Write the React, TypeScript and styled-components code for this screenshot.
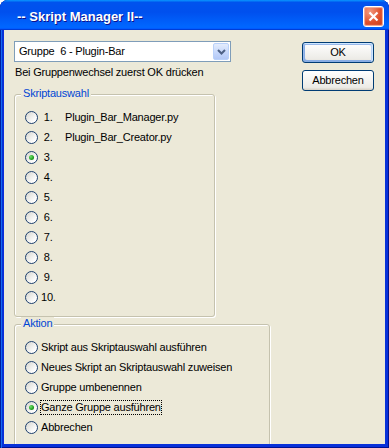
import { FC } from 'react'
import styled, { createGlobalStyle } from 'styled-components'

const GlobalStyle = createGlobalStyle`
  html, body {
    margin: 0;
    padding: 0;
    background: #fff;
    overflow: hidden;
  }

  body {
    font-family: 'Liberation Sans', Arial, sans-serif;
    font-size: 11px;
    letter-spacing: -0.2px;
    color: #000;
  }
`

const Window = styled.div`
  width: 389px;
  height: 448px;
  display: flex;
  flex-direction: column;
  border-radius: 8px 8px 0 0;
  overflow: hidden;
  background: #0831d9;
  box-shadow: inset 1px 0 #001ea0, inset 2px 0 #166aee, inset -1px 0 #001090,
    inset 0 -1px #001090;
`

const TitleBar = styled.div`
  height: 30px;
  flex: none;
  display: flex;
  align-items: center;
  padding: 0 5px 0 17px;
  background: linear-gradient(
    180deg,
    #0997ff,
    #0053ee 8%,
    #0050ee 40%,
    #06f 88%,
    #06f 93%,
    #005bff 95%,
    #003dd7 96%,
    #003dd7
  );
`

const Title = styled.span`
  flex: 1;
  padding-top: 3px;
  color: #fff;
  font: bold 13px/13px 'Liberation Sans', Arial, sans-serif;
  letter-spacing: 0;
  text-shadow: 1px 1px #0f1089;
  white-space: pre;
`

const CloseButton = styled.div`
  width: 21px;
  height: 21px;
  margin-top: 3px;
  box-sizing: border-box;
  display: grid;
  place-items: center;
  border: 1px solid #fff;
  border-radius: 3px;
  background: radial-gradient(circle at 30% 25%, #f29a80, #e0502c 55%, #c93c18);
  box-shadow: inset 0 0 1px 1px #f4b3a0;
`

const Body = styled.div`
  flex: 1;
  min-height: 0;
  display: flex;
  justify-content: space-between;
  margin: 0 4px 4px;
  padding: 11px 11px 0 10px;
  background: #ece9d8;
  overflow: hidden;
`

const LeftColumn = styled.div`
  display: flex;
  flex-direction: column;
  align-items: flex-start;
`

const Combo = styled.div`
  width: 217px;
  height: 21px;
  box-sizing: border-box;
  display: flex;
  align-items: center;
  padding: 1px;
  border: 1px solid #7f9db9;
  background: #fff;
`

const ComboText = styled.span`
  flex: 1;
  padding-left: 3px;
  line-height: 13px;
  white-space: pre;
`

const ComboArrow = styled.span`
  width: 16px;
  height: 17px;
  box-sizing: border-box;
  display: grid;
  place-items: center;
  border: 1px solid #b9d1fa;
  border-radius: 2px;
  background: linear-gradient(180deg, #e4edfd, #c4d6fb 60%, #b3c9f7);
`

const Hint = styled.div`
  margin-top: 4px;
  padding-left: 1px;
  line-height: 13px;
`

const GroupBox = styled.div<{ $width: number; $gap: number }>`
  position: relative;
  flex: none;
  width: ${(p) => p.$width}px;
  box-sizing: border-box;
  margin-top: ${(p) => p.$gap}px;
  padding: 12px 0 9px 10px;
  border: 1px solid #c5c2ae;
  border-radius: 3px;
  box-shadow: inset 1px 1px 0 #fff, 1px 1px 0 #fff;
`

const Legend = styled.span`
  position: absolute;
  top: -8px;
  left: 6px;
  padding: 0 2px;
  line-height: 13px;
  background: #ece9d8;
  color: #0046d5;
`

const Row = styled.div`
  height: 20px;
  display: flex;
  align-items: center;
  white-space: pre;
`

const Radio = styled.span<{ $checked?: boolean }>`
  width: 13px;
  height: 13px;
  box-sizing: border-box;
  flex: none;
  display: grid;
  place-items: center;
  margin-right: 2px;
  border: 1px solid #1c3f6e;
  border-radius: 50%;
  background: linear-gradient(135deg, #d6d6cf, #fff 80%);

  &::after {
    content: '';
    display: ${(p) => (p.$checked ? 'block' : 'none')};
    width: 5px;
    height: 5px;
    border-radius: 50%;
    background: radial-gradient(circle at 35% 35%, #6fe06b, #21a121 60%, #0f7a0f);
  }
`

const Label = styled.span<{ $focus?: boolean }>`
  line-height: 13px;
  border: 1px dotted ${(p) => (p.$focus ? '#000' : 'transparent')};
`

const Num = styled.span`
  display: inline-block;
  width: 24px;
`

const ButtonColumn = styled.div`
  display: flex;
  flex-direction: column;
  gap: 7px;
  padding-top: 1px;
`

const Button = styled.div<{ $default?: boolean }>`
  width: 72px;
  height: 21px;
  box-sizing: border-box;
  display: grid;
  place-items: center;
  border: 1px solid #003c74;
  border-radius: 3px;
  background: linear-gradient(180deg, #fff, #ecebe6 86%, #d6d0c5);
  line-height: 13px;
  box-shadow: ${(p) =>
    p.$default
      ? 'inset -1px 1px #cee7ff, inset 1px 2px #98b8ea, inset -2px 2px #bcd4f6, inset 1px -1px #89ade4, inset 2px -2px #89ade4'
      : 'none'};
`

const scripts = ['Plugin_Bar_Manager.py', 'Plugin_Bar_Creator.py', '', '', '', '', '', '', '', '']

const actions = [
  'Skript aus Skriptauswahl ausführen',
  'Neues Skript an Skriptauswahl zuweisen',
  'Gruppe umbenennen',
  'Ganze Gruppe ausführen',
  'Abbrechen',
]

const App: FC = () => {
  const selectedScript = 2
  const selectedAction = 3

  return (
    <>
      <GlobalStyle />
      <Window>
        <TitleBar>
          <Title>-- Skript Manager II--</Title>
          <CloseButton>
            <svg width="11" height="11" viewBox="0 0 11 11">
              <path d="M1.5 1.5 L9.5 9.5 M9.5 1.5 L1.5 9.5" stroke="#fff" strokeWidth="2.2" />
            </svg>
          </CloseButton>
        </TitleBar>
        <Body>
          <LeftColumn>
            <Combo>
              <ComboText>Gruppe  6 - Plugin-Bar</ComboText>
              <ComboArrow>
                <svg width="9" height="6" viewBox="0 0 9 6">
                  <path d="M1 1 L4.5 4.5 L8 1" fill="none" stroke="#4d6185" strokeWidth="2" />
                </svg>
              </ComboArrow>
            </Combo>
            <Hint>Bei Gruppenwechsel zuerst OK drücken</Hint>
            <GroupBox $width={201} $gap={15}>
              <Legend>Skriptauswahl</Legend>
              {scripts.map((name, i) => (
                <Row key={i}>
                  <Radio $checked={i === selectedScript} />
                  <Label>
                    <Num>{i < 9 ? ` ${i + 1}.` : `${i + 1}.`}</Num>
                    {name}
                  </Label>
                </Row>
              ))}
            </GroupBox>
            <GroupBox $width={256} $gap={7}>
              <Legend>Aktion</Legend>
              {actions.map((text, i) => (
                <Row key={text}>
                  <Radio $checked={i === selectedAction} />
                  <Label $focus={i === selectedAction}>{text}</Label>
                </Row>
              ))}
            </GroupBox>
          </LeftColumn>
          <ButtonColumn>
            <Button $default>OK</Button>
            <Button>Abbrechen</Button>
          </ButtonColumn>
        </Body>
      </Window>
    </>
  )
}

export default App
